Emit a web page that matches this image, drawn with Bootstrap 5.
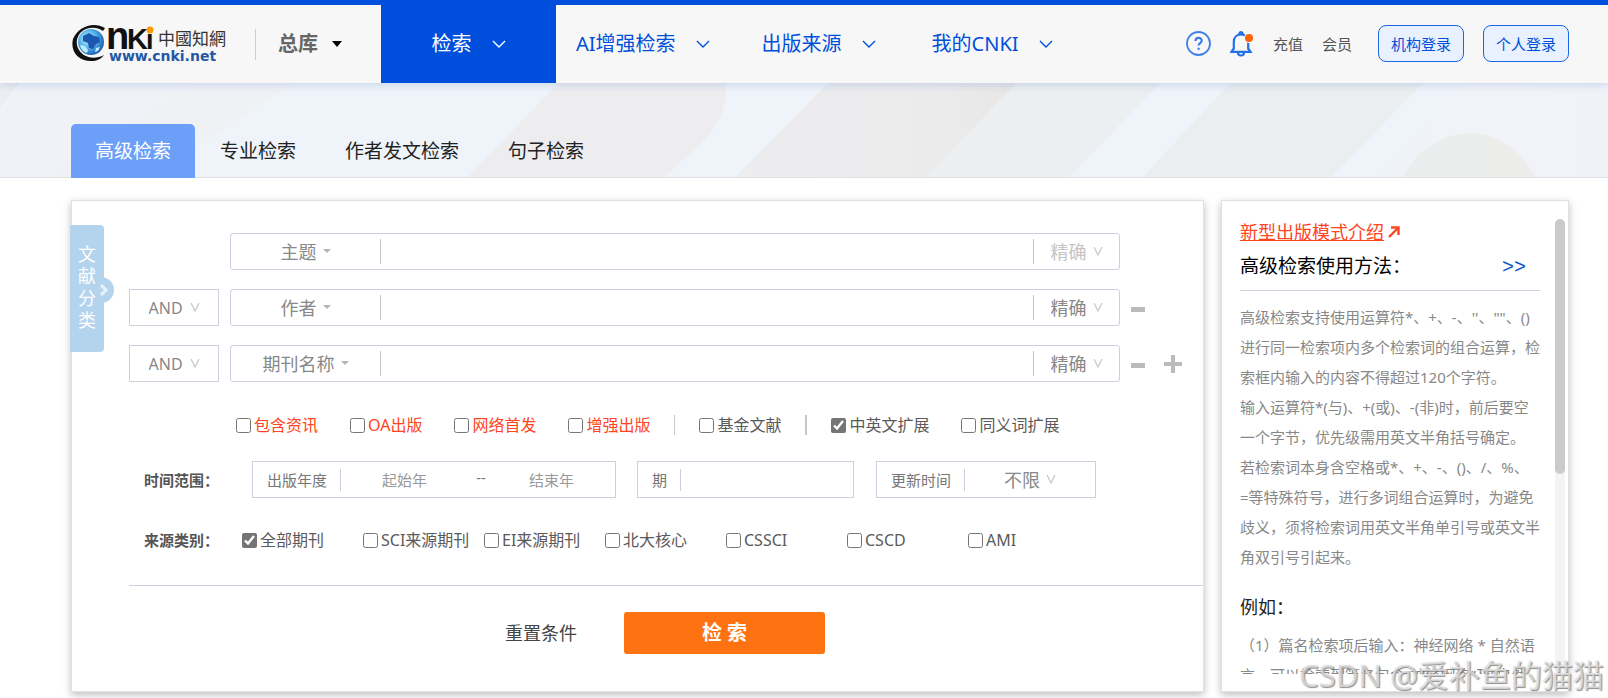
<!DOCTYPE html>
<html lang="zh-CN">
<head>
<meta charset="utf-8">
<meta name="viewport" content="width=device-width, initial-scale=1">
<title>高级检索 - 中国知网</title>
<link href="https://cdn.jsdelivr.net/npm/bootstrap@5.3.0/dist/css/bootstrap.min.css" rel="stylesheet">
<style>
  :root { --brand: #004fdc; --line: #ccd1dd; --soft: #888; }
  body { font-family: "Noto Sans", "Noto Sans CJK SC", sans-serif; font-size: 16px; line-height: 24px; color: #5a5a5a; background: #fff; }
  a { text-decoration: none; }
  .page-gutter { padding-left: 71px; padding-right: 39px; }

  .site-header { background: #f7f7f7; border-top: 5px solid var(--brand); height: 83px; box-shadow: 0 2px 8px rgba(70, 110, 190, .22); z-index: 2; }
  .logo { width: 160px; height: 44px; }
  .lib-switch { border: 0; border-left: 1px solid #b5d3f7; background: none; height: 31px; margin-left: 24px; padding: 0 0 0 22px; width: 126px; gap: 14px; font-size: 20px; font-weight: 700; color: #666; }
  .top-nav .nav-link { font-size: 20px; color: var(--brand); gap: 20px; padding: 0; }
  .top-nav .nav-link.active { background: var(--brand); color: #fff; width: 175px; margin-right: 20px; }
  .quiet-link { font-size: 15px; color: #555; }
  .header-tools { gap: 19px; padding-bottom: 1px; }
  .member-link { margin-right: 7px; }
  .login-btn { width: 86px; height: 37px; padding: 0; font-size: 15px; line-height: 20px; color: var(--brand); background: #e9f1ff; border: 1px solid #1b66e6; border-radius: 8px; }

  .banner { height: 95px; background: #eef4f9; border-bottom: 1px solid #dfe1e4; }
  .banner-art { position: absolute; inset: 0; width: 100%; height: 100%; }
  .mode-tabs { gap: 1px; margin-bottom: -1px; }
  .mode-tabs .nav-link { font-size: 19px; line-height: 28px; height: 54px; padding: 13px 24px; color: #222; border-radius: 5px 5px 0 0; }
  .mode-tabs .nav-link.active { background: #6c9ff7; color: #fff; }

  .work-area { padding-top: 22px; padding-bottom: 7px; gap: 17px; }
  .sheet { background: #fff; border: 1px solid #e1e1e1; box-shadow: 0 3px 8px rgba(0, 0, 0, .25); }
  .search-sheet { padding: 32px 0 36px 57px; min-width: 0; }
  .sort-handle { position: absolute; left: -2px; top: 24px; width: 34px; height: 127px; border: 0; padding: 0 0 4px 8px; background: #b4d3ed; color: #fff; border-radius: 0 4px 4px 0; font-size: 18px; line-height: 22px; text-align: left; }
  .sort-handle span { display: block; width: 18px; }
  .sort-handle svg { position: absolute; left: 18px; top: 52px; }

  .query-rows { gap: 19px; }
  .frame { border: 1px solid var(--line); height: 37px; background: #fff; }
  .logic { width: 90px; margin-right: 11px; }
  .rounded-frame { border-radius: 3px; }
  .tools { width: 83px; padding-left: 11px; gap: 19px; }
  .tools button { border: 0; background: none; padding: 0; line-height: 0; }
  .pick { display: inline-flex; align-items: center; justify-content: center; gap: 6px; color: var(--soft); font-size: 18px; }
  .pick select { appearance: none; border: 0; padding: 0; background: none; color: inherit; font-size: inherit; line-height: 26px; outline: 0; }
  .pick select:disabled { opacity: 1; color: #c4c4c4; }
  .pick-field { width: 149px; }
  .pick-match { width: 85px; }
  .logic .pick { font-size: 16px; }
  .rule { width: 1px; height: 25px; background: #c2c2c2; flex: none; }
  .plain-input { border: 0; outline: 0; padding: 0 8px; background: none; min-width: 0; font-size: 15px; color: #555; }
  .plain-input::placeholder { color: #999; }

  .tick { display: inline-flex; align-items: center; gap: 3px; white-space: nowrap; }
  .tick input { width: 15px; height: 15px; margin: 0; accent-color: #757575; flex: none; }
  .hot { color: #ff4422; }
  .flag-row { margin: 31px 0 0 107px; gap: 24px; }
  .flag-row .bundle { gap: 32px; }
  .flag-row .rule { height: 20px; background: #c8c8c8; }
  .flag-row .rule-thick { width: 2px; }
  .row-label { width: 123px; padding-left: 15px; font-size: 15px; font-weight: 700; color: #555; flex: none; }
  .time-row { margin-top: 24px; }
  .time-row .frame { font-size: 15px; color: #777; padding-left: 14px; }
  .time-row .frame .rule { height: 22px; background: var(--line); margin-left: 13px; }
  .span-year { width: 364px; margin-right: 21px; }
  .span-year .dash { padding: 0 2px 6px 8px; }
  .span-issue { width: 217px; margin-right: 22px; }
  .span-update { width: 220px; }
  .source-row { margin-top: 30px; }
  .source-grid { display: grid; grid-template-columns: repeat(7, 121px); margin-left: -10px; }
  .action-row { border-top: 1px solid var(--line); margin-top: 33px; padding: 26px 0 0 376px; gap: 47px; }
  .reset-btn { border: 0; background: none; padding: 0; font-size: 18px; color: #444; }
  .go-btn { width: 201px; height: 42px; padding: 0; border: 0; border-radius: 3px; background: #ff7211; color: #fff; font-size: 20px; font-weight: 700; }
  .go-btn:hover { background: #f0650a; color: #fff; }

  .guide-sheet { width: 348px; flex: none; padding: 18px 3px 17px 18px; }
  .guide-body { width: 300px; height: 455px; overflow: hidden; white-space: nowrap; }
  .guide-link { color: #ff4422; font-size: 18px; line-height: 26px; }
  .guide-title { font-size: 19px; line-height: 28px; color: #000; margin: 7px 0 0; font-weight: 400; }
  .guide-more { color: #0a56c8; font-family: "Liberation Mono", monospace; font-size: 20px; margin-right: 14px; }
  .guide-head { border-bottom: 1px solid var(--line); padding-bottom: 10px; }
  .guide-text { font-size: 15px; line-height: 30px; color: var(--soft); margin: 0; }
  .guide-intro { margin-top: 11px; }
  .guide-sub { font-size: 18px; line-height: 30px; color: #222; font-weight: 400; margin: 20px 0 8px; }
  .bar-track { width: 10px; background: #f4f4f4; border-radius: 5px; }
  .bar-thumb { height: 255px; background: #cacaca; border-radius: 5px; }
  .stamp { position: absolute; right: 4px; bottom: 4px; font-size: 31px; line-height: 40px; color: rgba(255, 255, 255, .6); text-shadow: 1px 1px 1px rgba(110, 110, 110, .75), 0 0 1px rgba(150, 150, 150, .6); pointer-events: none; white-space: nowrap; z-index: 3; }
</style>
</head>
<body class="position-relative">

<header class="site-header position-relative page-gutter d-flex align-items-stretch">
  <a href="#" class="d-flex align-items-center" aria-label="中国知网 CNKI">
    <svg class="logo" viewBox="71 20 160 44">
      <defs>
        <radialGradient id="globe" cx=".38" cy=".38" r=".7"><stop offset="0" stop-color="#d5f4ff"/><stop offset=".45" stop-color="#58b9ec"/><stop offset="1" stop-color="#1450a8"/></radialGradient>
      </defs>
      <path d="M105 26C93 19 78 25 73 37c-3 12 5 22 18 22 6 0 10-2 13-6-9 5-20 3-25-5-5-8-1-18 7-21 6-2 11-2 17 2z" fill="#111"/>
      <circle cx="91" cy="40" r="13" fill="url(#globe)"/>
      <path d="M83 34l6-3 5 3 5 1 1 5-4 2-3 5-4-1-1-5-5-2z" fill="#1c58b0"/>
      <path d="M80 43l5 1 3 4-1 3c-4-1-6-4-7-8zM96 46l4-1-2 4-3 1z" fill="#bdeaff"/>
      <g font-family="Liberation Sans" font-weight="700" fill="#111">
        <text x="106" y="47" font-size="38">n</text>
        <text x="127" y="47" font-size="29">K</text>
        <text x="146" y="47" font-size="27">i</text>
      </g>
      <circle cx="150" cy="28" r="3.500" fill="#f90"/>
      <text x="158" y="43" font-family="Noto Sans CJK TC" font-size="17" fill="#333">中國知網</text>
      <text x="109" y="59" font-family="DejaVu Sans" font-weight="700" font-size="14" fill="#2458a6">www.cnki.net</text>
    </svg>
  </a>
  <button type="button" class="lib-switch d-flex align-items-center align-self-center">总库
    <svg width="10" height="6" viewBox="0 0 10 6"><path d="M0 0h10L5 6z" fill="#000"/></svg>
  </button>
  <nav class="top-nav nav flex-nowrap align-items-stretch text-nowrap">
    <a class="nav-link active d-flex align-items-center justify-content-center" href="#">检索
      <svg width="14" height="8" viewBox="0 0 14 8" fill="none" stroke="currentColor" stroke-width="1.4"><path d="M1 1l6 6 6-6"/></svg></a>
    <a class="nav-link d-flex align-items-center me-5" href="#">AI增强检索
      <svg width="14" height="8" viewBox="0 0 14 8" fill="none" stroke="currentColor" stroke-width="1.4"><path d="M1 1l6 6 6-6"/></svg></a>
    <a class="nav-link d-flex align-items-center ms-1 me-5" href="#">出版来源
      <svg width="14" height="8" viewBox="0 0 14 8" fill="none" stroke="currentColor" stroke-width="1.4"><path d="M1 1l6 6 6-6"/></svg></a>
    <a class="nav-link d-flex align-items-center ms-2" href="#">我的CNKI
      <svg width="14" height="8" viewBox="0 0 14 8" fill="none" stroke="currentColor" stroke-width="1.4"><path d="M1 1l6 6 6-6"/></svg></a>
  </nav>
  <div class="header-tools d-flex align-items-center ms-auto text-nowrap">
    <a href="#" class="d-flex" aria-label="帮助">
      <svg width="25" height="25" viewBox="0 0 25 25" fill="none" stroke="#3d7ee8"><circle cx="12.500" cy="12.500" r="11.500" stroke-width="1.800"/><path d="M9.500 10c0-4.200 6.200-4 6.200-.3 0 2.400-3.100 2.500-3.100 4.900" stroke-width="2.200"/><circle cx="12.600" cy="17.800" r=".9" fill="#3d7ee8" stroke-width=".8"/></svg></a>
    <a href="#" class="d-flex" aria-label="消息">
      <svg width="24" height="27" viewBox="0 0 24 27"><g fill="none" stroke="#2470e6" stroke-width="2.200"><path d="M3.800 19.500V12c0-4.500 3-7.500 7.200-7.500S18.200 7.500 18.200 12v7.500M3.800 18.500L1.500 21.800h19l-2.300-3.300M8 22.500c0 4 6 4 6 0"/></g><path d="M8 5c0-5.500 6-5.500 6 0z" fill="#2470e6"/><circle cx="19" cy="8" r="5" fill="#f7f7f7"/><circle cx="19" cy="8" r="4" fill="#ff6600"/></svg></a>
    <a href="#" class="quiet-link">充值</a>
    <a href="#" class="quiet-link member-link">会员</a>
    <button type="button" class="btn login-btn">机构登录</button>
    <button type="button" class="btn login-btn">个人登录</button>
  </div>
</header>

<section class="banner position-relative page-gutter d-flex align-items-end">
  <svg class="banner-art" viewBox="0 0 1608 95" preserveAspectRatio="none" aria-hidden="true">
    <defs>
      <linearGradient id="haze" x1="0" x2="1"><stop offset="0" stop-color="#eef3f8"/><stop offset=".5" stop-color="#f2f3f8"/><stop offset="1" stop-color="#eff3f8"/></linearGradient>
      <linearGradient id="sand" x1="0" x2="1"><stop offset="0" stop-color="#ededf0"/><stop offset=".75" stop-color="#ebebec"/><stop offset="1" stop-color="#e8e6e5"/></linearGradient>
      <linearGradient id="arch" x1="0" x2="1"><stop offset="0" stop-color="#e9eeee"/><stop offset="1" stop-color="#ededea"/></linearGradient>
    </defs>
    <path d="M0 0h20L0 25z" fill="#ededf1"/>
    <path d="M25 0h165L80 95H0V30z" fill="#f0f2f7"/>
    <path d="M190 0h105L150 95H50z" fill="#f0f1f5"/>
    <path d="M558 0h168c2 40-18 55-62 95H468z" fill="#ededf0"/>
    <path d="M828 0h189l-90 95H735z" fill="url(#sand)"/>
    <path d="M1017 0h143l-90 95H927z" fill="#eceff1"/>
    <path d="M1230 0h193l-92 95H1143z" fill="#ebeef0"/>
    <path d="M1460 0h148v95h-230z" fill="url(#haze)"/>
    <path d="M1403 95c28-57 103-60 132 0z" fill="url(#arch)"/>
  </svg>
  <nav class="mode-tabs nav flex-nowrap text-nowrap position-relative">
    <a class="nav-link active" href="#">高级检索</a>
    <a class="nav-link" href="#">专业检索</a>
    <a class="nav-link" href="#">作者发文检索</a>
    <a class="nav-link" href="#">句子检索</a>
  </nav>
</section>

<main class="work-area page-gutter d-flex align-items-stretch">
  <form class="sheet search-sheet position-relative flex-grow-1">
    <button type="button" class="sort-handle"><span>文</span><span>献</span><span>分</span><span>类</span>
      <svg width="26" height="26" viewBox="0 0 26 26"><path d="M13 0a13 13 0 0 1 0 26z" fill="#b4d3ed"/><path d="M13 8l5 5-5 5" fill="none" stroke="#e8f2fa" stroke-width="3"/></svg>
    </button>

    <div class="query-rows d-flex flex-column">
      <div class="d-flex align-items-center">
        <div class="logic flex-shrink-0"></div>
        <div class="frame rounded-frame d-flex align-items-center flex-grow-1">
          <span class="pick pick-field"><select aria-label="检索字段一"><option>主题</option></select><svg width="8" height="5" viewBox="0 0 8 5"><path d="M0 0h8L4 4z" fill="#b5b5b5"/></svg></span>
          <span class="rule"></span>
          <input class="plain-input flex-grow-1" type="text" aria-label="检索词一">
          <span class="rule"></span>
          <span class="pick pick-match"><select aria-label="匹配方式一" disabled><option>精确</option></select><svg width="10" height="9" viewBox="0 0 10 9"><path d="M1 0l4 8 4-8" fill="none" stroke="#c6c6c6" stroke-width="1.200"/></svg></span>
        </div>
        <div class="tools flex-shrink-0"></div>
      </div>
      <div class="d-flex align-items-center">
        <div class="frame logic d-flex justify-content-center flex-shrink-0">
          <span class="pick"><select aria-label="逻辑关系二"><option>AND</option></select><svg width="10" height="9" viewBox="0 0 10 9"><path d="M1 0l4 8 4-8" fill="none" stroke="#c6c6c6" stroke-width="1.200"/></svg></span>
        </div>
        <div class="frame rounded-frame d-flex align-items-center flex-grow-1">
          <span class="pick pick-field"><select aria-label="检索字段二"><option>作者</option></select><svg width="8" height="5" viewBox="0 0 8 5"><path d="M0 0h8L4 4z" fill="#b5b5b5"/></svg></span>
          <span class="rule"></span>
          <input class="plain-input flex-grow-1" type="text" aria-label="检索词二">
          <span class="rule"></span>
          <span class="pick pick-match"><select aria-label="匹配方式二"><option>精确</option></select><svg width="10" height="9" viewBox="0 0 10 9"><path d="M1 0l4 8 4-8" fill="none" stroke="#c6c6c6" stroke-width="1.200"/></svg></span>
        </div>
        <div class="tools d-flex align-items-center flex-shrink-0">
          <button type="button" aria-label="删除第二行"><svg width="14" height="18" viewBox="0 0 14 18"><path d="M0 8h14v5H0z" fill="#bbb"/></svg></button>
        </div>
      </div>
      <div class="d-flex align-items-center">
        <div class="frame logic d-flex justify-content-center flex-shrink-0">
          <span class="pick"><select aria-label="逻辑关系三"><option>AND</option></select><svg width="10" height="9" viewBox="0 0 10 9"><path d="M1 0l4 8 4-8" fill="none" stroke="#c6c6c6" stroke-width="1.200"/></svg></span>
        </div>
        <div class="frame rounded-frame d-flex align-items-center flex-grow-1">
          <span class="pick pick-field"><select aria-label="检索字段三"><option>期刊名称</option></select><svg width="8" height="5" viewBox="0 0 8 5"><path d="M0 0h8L4 4z" fill="#b5b5b5"/></svg></span>
          <span class="rule"></span>
          <input class="plain-input flex-grow-1" type="text" aria-label="检索词三">
          <span class="rule"></span>
          <span class="pick pick-match"><select aria-label="匹配方式三"><option>精确</option></select><svg width="10" height="9" viewBox="0 0 10 9"><path d="M1 0l4 8 4-8" fill="none" stroke="#c6c6c6" stroke-width="1.200"/></svg></span>
        </div>
        <div class="tools d-flex align-items-center flex-shrink-0">
          <button type="button" aria-label="删除第三行"><svg width="14" height="18" viewBox="0 0 14 18"><path d="M0 8h14v5H0z" fill="#bbb"/></svg></button>
          <button type="button" aria-label="添加一行"><svg width="18" height="18" viewBox="0 0 18 18"><path d="M7 0h4v7h7v4h-7v7H7v-7H0V7h7z" fill="#bbb"/></svg></button>
        </div>
      </div>
    </div>

    <div class="flag-row d-flex align-items-center">
      <div class="bundle d-flex hot">
        <label class="tick"><input type="checkbox">包含资讯</label>
        <label class="tick"><input type="checkbox">OA出版</label>
        <label class="tick"><input type="checkbox">网络首发</label>
        <label class="tick"><input type="checkbox">增强出版</label>
      </div>
      <span class="rule"></span>
      <label class="tick"><input type="checkbox">基金文献</label>
      <span class="rule rule-thick"></span>
      <div class="bundle d-flex">
        <label class="tick"><input type="checkbox" checked>中英文扩展</label>
        <label class="tick"><input type="checkbox">同义词扩展</label>
      </div>
    </div>

    <div class="time-row d-flex align-items-center text-nowrap">
      <div class="row-label">时间范围：</div>
      <div class="frame span-year d-flex align-items-center">
        <span>出版年度</span><span class="rule"></span>
        <input class="plain-input text-center flex-grow-1" type="text" size="8" placeholder="起始年" aria-label="起始年">
        <span class="dash">--</span>
        <input class="plain-input text-center flex-grow-1" type="text" size="8" placeholder="结束年" aria-label="结束年">
      </div>
      <div class="frame span-issue d-flex align-items-center">
        <label for="issue">期</label><span class="rule"></span>
        <input class="plain-input flex-grow-1" id="issue" type="text" size="8">
      </div>
      <div class="frame span-update d-flex align-items-center">
        <label for="updated">更新时间</label><span class="rule"></span>
        <span class="pick flex-grow-1"><select id="updated"><option>不限</option></select><svg width="10" height="9" viewBox="0 0 10 9"><path d="M1 0l4 8 4-8" fill="none" stroke="#c6c6c6" stroke-width="1.200"/></svg></span>
      </div>
    </div>

    <div class="source-row d-flex align-items-center">
      <div class="row-label">来源类别：</div>
      <div class="source-grid">
        <label class="tick"><input type="checkbox" checked>全部期刊</label>
        <label class="tick"><input type="checkbox">SCI来源期刊</label>
        <label class="tick"><input type="checkbox">EI来源期刊</label>
        <label class="tick"><input type="checkbox">北大核心</label>
        <label class="tick"><input type="checkbox">CSSCI</label>
        <label class="tick"><input type="checkbox">CSCD</label>
        <label class="tick"><input type="checkbox">AMI</label>
      </div>
    </div>

    <div class="action-row d-flex align-items-center">
      <button type="reset" class="reset-btn">重置条件</button>
      <button type="submit" class="btn go-btn">检 索</button>
    </div>
  </form>

  <aside class="sheet guide-sheet d-flex justify-content-between">
    <div class="guide-body">
      <a class="guide-link d-inline-flex align-items-center gap-1" href="#"><span class="text-decoration-underline">新型出版模式介绍</span>
        <svg width="12" height="12" viewBox="0 0 12 12"><path d="M1 11l9-9M3 1.500h7.500V9" fill="none" stroke="#ff4422" stroke-width="2.400"/></svg></a>
      <div class="guide-head d-flex align-items-end justify-content-between">
        <h2 class="guide-title">高级检索使用方法：</h2>
        <a class="guide-more" href="#">&gt;&gt;</a>
      </div>
      <p class="guide-text guide-intro">高级检索支持使用运算符*、+、-、''、""、()<br>进行同一检索项内多个检索词的组合运算，检<br>索框内输入的内容不得超过120个字符。<br>输入运算符*(与)、+(或)、-(非)时，前后要空<br>一个字节，优先级需用英文半角括号确定。<br>若检索词本身含空格或*、+、-、()、/、%、<br>=等特殊符号，进行多词组合运算时，为避免<br>歧义，须将检索词用英文半角单引号或英文半<br>角双引号引起来。</p>
      <h3 class="guide-sub">例如：</h3>
      <p class="guide-text">（1）篇名检索项后输入：神经网络 * 自然语<br>言，可以检索到篇名包含“神经网络”及“自然</p>
    </div>
    <div class="bar-track"><div class="bar-thumb"></div></div>
  </aside>
</main>

<div class="stamp">CSDN @爱补鱼的猫猫</div>

<script src="https://cdn.jsdelivr.net/npm/bootstrap@5.3.0/dist/js/bootstrap.bundle.min.js"></script>
</body>
</html>
